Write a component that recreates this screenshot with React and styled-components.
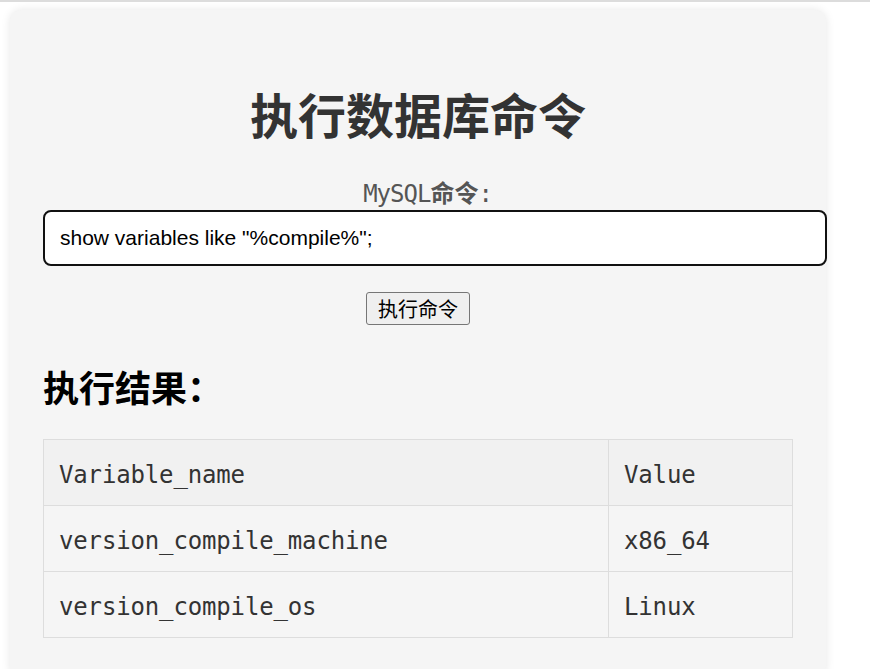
import React from 'react';
import styled, { createGlobalStyle } from 'styled-components';

const GlobalStyle = createGlobalStyle`
  html, body {
    margin: 0;
    padding: 0;
    background: #ffffff;
  }
  body {
    border-top: 2px solid #dcdcdc;
    font-family: "Noto Sans CJK SC", "Noto Sans", sans-serif;
  }
`;

const rows = [
  { name: 'version_compile_machine', value: 'x86_64' },
  { name: 'version_compile_os', value: 'Linux' },
];

function App() {
  return (
    <>
      <GlobalStyle />
      <Card>
        <Title>执行数据库命令</Title>
        <form onSubmit={e => e.preventDefault()}>
          <Label htmlFor="sql">
            <Latin>MySQL</Latin>命令<Latin>:</Latin>
          </Label>
          <SqlInput id="sql" defaultValue={'show variables like "%compile%";'} />
          <ButtonRow>
            <RunButton type="submit">执行命令</RunButton>
          </ButtonRow>
        </form>
        <SubTitle>执行结果：</SubTitle>
        <Table>
          <thead>
            <tr>
              <Th $wide>Variable_name</Th>
              <Th>Value</Th>
            </tr>
          </thead>
          <tbody>
            {rows.map(r => (
              <tr key={r.name}>
                <Td>{r.name}</Td>
                <Td>{r.value}</Td>
              </tr>
            ))}
          </tbody>
        </Table>
      </Card>
    </>
  );
}

export default App;

const Card = styled.div`
  margin: 8px 44px 0 10px;
  width: 750px;
  padding: 33px 33px 40px;
  background-color: #f5f5f5;
  border-radius: 12px;
  box-shadow: 0 0 10px rgba(0, 0, 0, 0.1);
`;

const Title = styled.h1`
  margin: 40px 0 0;
  text-align: center;
  font-size: 48px;
  line-height: 60px;
  font-weight: 700;
  color: #333;
`;

const Label = styled.label`
  display: block;
  margin-top: 35px;
  padding-left: 19px;
  text-align: center;
  font-family: "Noto Sans CJK SC", sans-serif;
  font-size: 24px;
  line-height: 28px;
  font-weight: 700;
  color: #555;
`;

const Latin = styled.span`
  font-family: "DejaVu Sans Mono", monospace;
  font-weight: 400;
  letter-spacing: -1px;
`;

const SqlInput = styled.input`
  display: block;
  margin-top: 2px;
  width: 100%;
  padding: 14px 15px;
  border: 2px solid #111;
  border-radius: 8px;
  background: #fff;
  font-family: "Liberation Sans", Arial, sans-serif;
  font-size: 21px;
  line-height: 24px;
  color: #000;
  outline: none;
`;

const ButtonRow = styled.div`
  display: flex;
  justify-content: center;
  margin-top: 26px;
`;

const RunButton = styled.button`
  height: 33px;
  padding: 0 11px;
  border: 1px solid #767676;
  border-radius: 3px;
  background-color: #efefef;
  font-family: "Noto Sans CJK SC", sans-serif;
  font-size: 20px;
  font-weight: 400;
  color: #000;
`;

const SubTitle = styled.h2`
  margin: 39px 0 0;
  font-size: 36px;
  line-height: 44px;
  font-weight: 700;
  color: #000;
`;

const Table = styled.table`
  margin-top: 31px;
  width: 100%;
  border-collapse: collapse;
  font-family: "DejaVu Sans Mono", monospace;
  font-size: 24px;
  letter-spacing: -0.15px;
  color: #333;
`;

const Th = styled.th`
  width: ${p => (p.$wide ? '534px' : 'auto')};
  padding: 23px 15px 17px;
  line-height: 25px;
  text-align: left;
  font-weight: 400;
  background-color: #f1f1f1;
  border: 1px solid #ddd;
`;

const Td = styled.td`
  padding: 23px 15px 17px;
  line-height: 25px;
  border: 1px solid #ddd;
`;
